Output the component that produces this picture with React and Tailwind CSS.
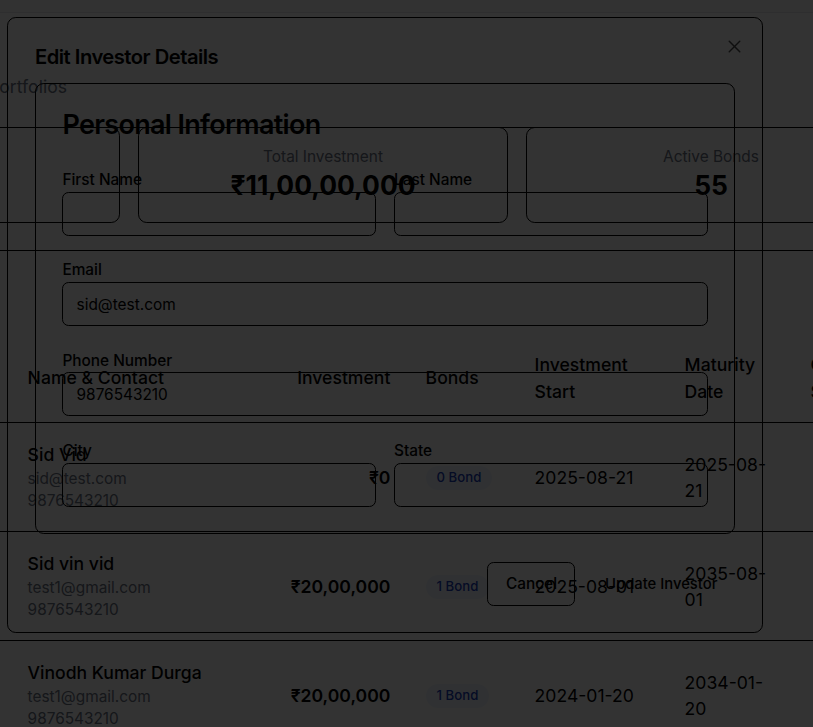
import React from 'react';
import { X, ChevronDown } from 'lucide-react';

const investors = [
  { name: 'Sid Vid', email: 'sid@test.com', phone: '9876543210', amount: '₹0', bonds: '0 Bond', start: '2025-08-21', maturity: '2025-08-21' },
  { name: 'Sid vin vid', email: 'test1@gmail.com', phone: '9876543210', amount: '₹20,00,000', bonds: '1 Bond', start: '2025-08-01', maturity: '2035-08-01' },
  { name: 'Vinodh Kumar Durga', email: 'test1@gmail.com', phone: '9876543210', amount: '₹20,00,000', bonds: '1 Bond', start: '2024-01-20', maturity: '2034-01-20' },
];

const stats = [
  { title: 'Total Investors', value: '3' },
  { title: 'Total Investment', value: '₹11,00,00,000' },
  { title: 'Active Bonds', value: '55' },
  { title: 'Upcoming Payouts', value: '0' },
];

const cols = 'grid w-[933px] grid-cols-[10px_270px_128px_109px_150px_126px_140px]';

function Field({ label, value }) {
  return (
    <div className="flex flex-col">
      <label className="text-[15.4px] font-medium leading-none">{label}</label>
      <div className="mt-[4.4px] flex h-[44px] items-center rounded-[6.6px] border border-black px-[13.2px]">
        <span className="text-[15.4px] text-black">{value}</span>
      </div>
    </div>
  );
}

export default function App() {
  return (
    <div className="relative h-[727px] w-[813px] overflow-hidden bg-white font-[Inter,sans-serif] text-black">
      {/* page underneath */}
      <div className="h-[13px] border-b border-gray-200 bg-gray-50" />
      <div className="mt-[61px] flex w-[67px] justify-end whitespace-nowrap text-[17.6px] leading-[26px] text-gray-500">
        Track and manage investor portfolios
      </div>

      <div className="mt-[27px] w-[1400px] border-t border-black">
        <div className="-mt-px ml-[-250px] flex gap-[18px]">
          {stats.map((s) => (
            <div key={s.title} className="flex h-[96px] w-[370px] shrink-0 flex-col items-center justify-center rounded-[8.8px] border border-black">
              <p className="text-[15.4px] leading-[22px] text-gray-500">{s.title}</p>
              <p className="text-[26.4px] font-bold leading-[35.2px]">{s.value}</p>
            </div>
          ))}
        </div>
      </div>

      <div className="mt-[27px] w-[933px] border-t border-black">
        <div className="h-[84px]" />
        <div className={`${cols} h-[88px] border-b border-black text-[17.6px] font-medium leading-[26.4px]`}>
          <div />
          <div className="flex items-center px-[17.6px]">Name &amp; Contact</div>
          <div className="flex items-center justify-end px-[17.6px]">Investment</div>
          <div className="flex items-center px-[17.6px]">Bonds</div>
          <div className="flex items-center px-[17.6px]">Investment Start</div>
          <div className="flex items-center px-[17.6px]">Maturity Date</div>
          <div className="flex items-center px-[17.6px]">Current Status</div>
        </div>
        {investors.map((inv) => (
          <div key={inv.name} className={`${cols} h-[109px] border-b border-black`}>
            <div />
            <div className="flex flex-col justify-center px-[17.6px]">
              <p className="text-[17.6px] font-medium leading-[26.4px]">{inv.name}</p>
              <p className="text-[15.4px] leading-[22px] text-gray-500">{inv.email}</p>
              <p className="text-[15.4px] leading-[22px] text-gray-500">{inv.phone}</p>
            </div>
            <div className="flex items-center justify-end px-[17.6px] pt-[2px] text-[17.6px] font-semibold">{inv.amount}</div>
            <div className="flex items-center px-[17.6px] pt-[2px]">
              <span className="rounded-full bg-blue-50 px-[11px] py-[2.2px] text-[13.2px] font-medium text-blue-800">{inv.bonds}</span>
            </div>
            <div className="flex items-center px-[17.6px] pt-[2px] text-[17.6px] leading-[26.4px]">{inv.start}</div>
            <div className="flex items-center px-[17.6px] pt-[2px] text-[17.6px] leading-[26.4px]">{inv.maturity}</div>
            <div className="flex items-center px-[17.6px]">
              <ChevronDown size={14} className="mt-[26px] text-gray-500" />
            </div>
          </div>
        ))}
      </div>

      {/* overlay */}
      <div className="absolute inset-0 bg-black/80" />

      {/* dialog */}
      <div className="absolute left-[7px] top-[17px] w-[756px] rounded-[8.8px] border border-black px-[27px] pb-[26.4px] pt-[29px]">
        <button className="absolute right-[17px] top-[17.6px] text-black opacity-70">
          <X size={21} strokeWidth={1.6} />
        </button>
        <h2 className="text-[20.2px] font-semibold leading-none tracking-tight">Edit Investor Details</h2>

        <div className="mt-[16px] rounded-[8.8px] border border-black">
          <div className="p-[26.4px]">
            <h3 className="text-[27px] font-semibold leading-none tracking-tight">Personal Information</h3>
          </div>
          <div className="grid grid-cols-2 gap-x-[18px] gap-y-[26.4px] px-[26.4px] pb-[26.4px] pt-[8.2px]">
            <Field label="First Name" value="" />
            <Field label="Last Name" value="" />
            <div className="col-span-2">
              <Field label="Email" value="sid@test.com" />
            </div>
            <div className="col-span-2">
              <Field label="Phone Number" value="9876543210" />
            </div>
            <Field label="City" value="" />
            <Field label="State" value="" />
          </div>
        </div>

        <div className="mt-[28px] flex justify-end gap-[12px]">
          <button className="h-[44px] w-[88px] rounded-[6.6px] border border-black text-[15.4px] font-medium">Cancel</button>
          <button className="h-[44px] rounded-[6.6px] px-[17.6px] text-[14.8px] font-medium">Update Investor</button>
        </div>
      </div>
    </div>
  );
}
